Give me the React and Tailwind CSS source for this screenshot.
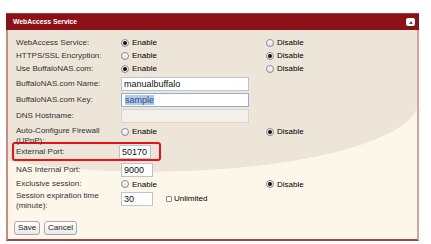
import React from 'react';

function Radio({ checked }) {
  return (
    <span className="w-[8px] h-[8px] shrink-0 rounded-full border border-[#8a8a8a] bg-[linear-gradient(#ffffff,#e2e2e2)] flex items-center justify-center">
      {checked && <span className="w-[4px] h-[4px] rounded-full bg-[#111]"></span>}
    </span>
  );
}

function RadioPair({ on }) {
  return (
    <>
      <div className="w-[145px] shrink-0 flex items-center gap-[3px]">
        <Radio checked={on === 'enable'} />
        <span className="pt-[1px]">Enable</span>
      </div>
      <div className="flex items-center gap-[3px]">
        <Radio checked={on === 'disable'} />
        <span className="pt-[1px]">Disable</span>
      </div>
    </>
  );
}

function Label({ children }) {
  return <div className="w-[105px] shrink-0 text-[#333]">{children}</div>;
}

function TextBox({ children, width = 'w-[128px]', tone = 'normal' }) {
  const cls =
    tone === 'focus'
      ? 'border-[#8fb0d9] bg-white'
      : tone === 'disabled'
      ? 'border-[#d9d5cd] bg-[#f3f0ea]'
      : 'border-[#bcc4cc] bg-white';
  return (
    <div className={`${width} h-[14px] shrink-0 border ${cls} pl-[2px] flex items-center text-[9px] text-[#111]`}>
      {children}
    </div>
  );
}

export default function App() {
  return (
    <div className="min-h-screen bg-white pt-[13px] pl-[6px] font-['Liberation_Sans',Arial,sans-serif] text-[8px] leading-[10px]">
      <div className="w-[413px]">
        {/* title bar */}
        <div className="h-[17px] bg-[#8c1117] border-t border-[#a9363a] flex items-center justify-between pl-[7px] pr-[4px]">
          <span className="text-white font-bold text-[6.8px]">WebAccess Service</span>
          <span className="w-[9px] h-[8px] bg-white rounded-[2px] flex items-center justify-center">
            <span className="w-0 h-0 border-l-[2.5px] border-r-[2.5px] border-b-[3px] border-l-transparent border-r-transparent border-b-[#555]"></span>
          </span>
        </div>

        {/* body */}
        <div className="h-[211px] border-l-2 border-r-2 border-b-2 border-l-[#c98a84] border-r-[#d9a29c] border-b-[#9e4b48] pt-[6px] bg-[image:radial-gradient(ellipse_270px_71px_at_142px_71px,#ece5d8_99%,transparent_100%),linear-gradient(#ece5d8_71px,#fdf7e9_71px)]">
          <div className="flex items-center h-[13px] pl-[8px]">
            <Label>WebAccess Service:</Label>
            <RadioPair on="enable" />
          </div>
          <div className="flex items-center h-[13px] pl-[8px]">
            <Label>HTTPS/SSL Encryption:</Label>
            <RadioPair on="disable" />
          </div>
          <div className="flex items-center h-[13px] pl-[8px]">
            <Label>Use BuffaloNAS.com:</Label>
            <RadioPair on="enable" />
          </div>

          <div className="flex items-center h-[17px] pl-[8px]">
            <Label>BuffaloNAS.com Name:</Label>
            <TextBox>manualbuffalo</TextBox>
          </div>
          <div className="flex items-center h-[15px] pl-[8px]">
            <Label>BuffaloNAS.com Key:</Label>
            <TextBox tone="focus">
              <span className="ml-[1px] bg-[#b3c9e8] text-[#2a4a87] leading-[10px]">sample</span>
            </TextBox>
          </div>
          <div className="flex items-center h-[18px] pl-[8px]">
            <Label>DNS Hostname:</Label>
            <TextBox tone="disabled" />
          </div>

          <div className="flex items-start h-[17px] pl-[8px] pt-[1px]">
            <Label>
              Auto-Configure Firewall
              <br />
              (UPnP):
            </Label>
            <RadioPair on="disable" />
          </div>

          <div className="ml-[4px] w-[149px] h-[19px] border-2 border-[#e8121a] rounded-[3px] flex items-center pl-[2px]">
            <div className="w-[103px] shrink-0 text-[#333]">External Port:</div>
            <TextBox width="w-[32px]">50170</TextBox>
          </div>

          <div className="flex items-center h-[17px] pl-[8px]">
            <Label>NAS Internal Port:</Label>
            <TextBox width="w-[32px]">9000</TextBox>
          </div>
          <div className="flex items-center h-[12px] pl-[8px]">
            <Label>Exclusive session:</Label>
            <RadioPair on="disable" />
          </div>

          <div className="flex items-start h-[19px] pl-[8px] pt-[1px]">
            <Label>
              Session expiration time
              <br />
              (minute):
            </Label>
            <div className="mt-[1px]">
              <TextBox width="w-[32px]">30</TextBox>
            </div>
            <div className="ml-[13px] mt-[2px] flex items-center gap-[2px]">
              <span className="w-[6px] h-[6px] border border-[#8a8a8a] rounded-[1px] bg-white"></span>
              <span className="pt-[1px]">Unlimited</span>
            </div>
          </div>

          <div className="flex gap-[4px] ml-[6px] mt-[12px]">
            <button className="w-[26px] h-[14px] border border-[#a8a8a8] rounded-[3px] bg-[linear-gradient(#ffffff,#e9e9e9)] text-[8px] text-[#222] leading-[12px]">
              Save
            </button>
            <button className="w-[33px] h-[14px] border border-[#a8a8a8] rounded-[3px] bg-[linear-gradient(#ffffff,#e9e9e9)] text-[8px] text-[#222] leading-[12px]">
              Cancel
            </button>
          </div>
        </div>
      </div>
    </div>
  );
}
